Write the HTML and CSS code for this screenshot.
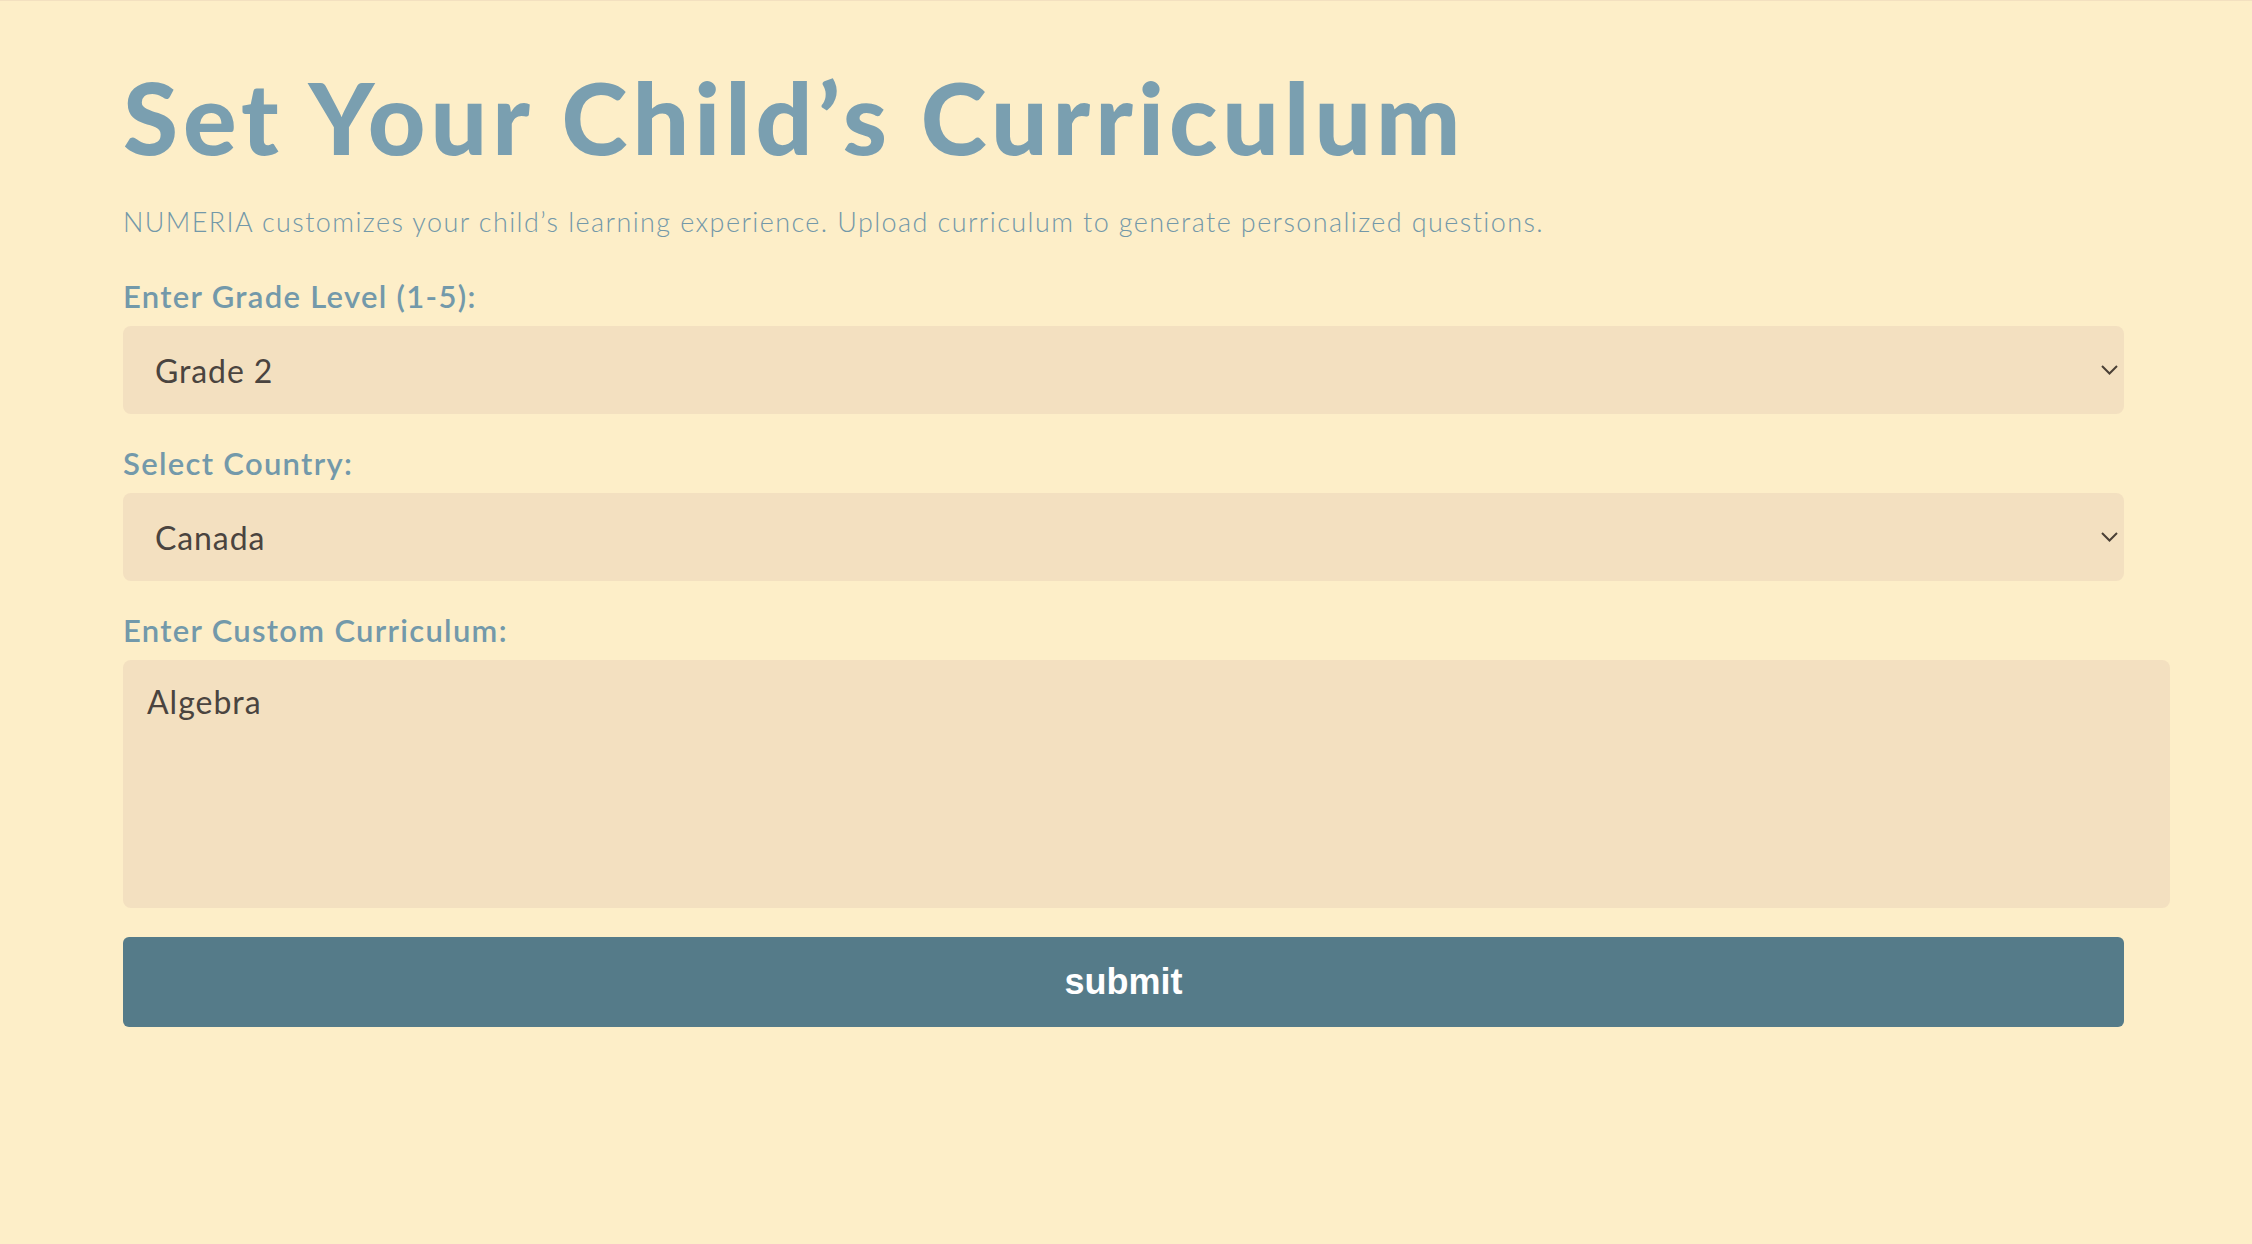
FILE: index.html
```html
<!DOCTYPE html>
<html lang="en">
<head>
<meta charset="utf-8">
<title>Set Your Child’s Curriculum</title>
<link rel="stylesheet" href="styles.css">
</head>
<body>
<main class="page">
  <h1 class="title">Set Your Child’s Curriculum</h1>
  <p class="subtitle">NUMERIA customizes your child’s learning experience. Upload curriculum to generate personalized questions.</p>
  <form class="form">
    <label class="label" for="grade">Enter Grade Level (1-5):</label>
    <div class="select-wrap">
      <select id="grade" class="select">
        <option>Grade 1</option>
        <option selected>Grade 2</option>
        <option>Grade 3</option>
        <option>Grade 4</option>
        <option>Grade 5</option>
      </select>
      <svg class="chevron" viewBox="0 0 17 10" width="17" height="10"><path d="M1 1 L8.5 8.5 L16 1" fill="none" stroke="#4a4036" stroke-width="2"/></svg>
    </div>
    <label class="label" for="country">Select Country:</label>
    <div class="select-wrap">
      <select id="country" class="select">
        <option selected>Canada</option>
        <option>United States</option>
        <option>United Kingdom</option>
      </select>
      <svg class="chevron" viewBox="0 0 17 10" width="17" height="10"><path d="M1 1 L8.5 8.5 L16 1" fill="none" stroke="#4a4036" stroke-width="2"/></svg>
    </div>
    <label class="label" for="custom">Enter Custom Curriculum:</label>
    <textarea id="custom" class="textarea">Algebra</textarea>
    <button type="button" class="submit">submit</button>
  </form>
</main>
</body>
</html>
```
FILE: styles.css
```css
html, body {
  margin: 0;
  padding: 0;
}
body {
  background: #fdeec8;
  border-top: 1px solid #f3e0c0;
  font-family: "Lato", "Open Sans", sans-serif;
  min-height: 1243px;
}
.page {
  padding: 0 128px 0 123px;
}
.title {
  margin: 55px 0 0;
  font-family: "Lato", sans-serif;
  font-weight: 900;
  font-size: 100px;
  line-height: 120px;
  letter-spacing: 5px;
  color: #7a9fb0;
}
.subtitle {
  margin: 30px 0 0;
  font-size: 27px;
  line-height: 32.4px;
  font-weight: 300;
  letter-spacing: 1.4px;
  color: #7398a8;
}
.form {
  display: flex;
  flex-direction: column;
  width: 2001px;
  margin-top: 40px;
}
.label {
  font-size: 31px;
  line-height: 37px;
  font-weight: 600;
  letter-spacing: 1.3px;
  color: #7399aa;
  margin-bottom: 11px;
}
.select-wrap {
  position: relative;
  margin-bottom: 31px;
}
.select {
  appearance: none;
  -webkit-appearance: none;
  width: 100%;
  height: 88px;
  border: none;
  border-radius: 8px;
  background: #f3e0c0;
  color: #4a443f;
  font-family: "Lato", sans-serif;
  font-size: 32px;
  letter-spacing: 0.9px;
  padding: 0 32px;
  outline: none;
  display: block;
}
.chevron {
  position: absolute;
  right: 6px;
  top: 39px;
}
.textarea {
  height: 248px;
  box-sizing: border-box;
  width: 2047px;
  border: none;
  border-radius: 8px;
  background: #f3e0c0;
  color: #4a443f;
  font-family: "Lato", sans-serif;
  font-size: 32px;
  letter-spacing: 1px;
  padding: 22px 24px;
  resize: none;
  outline: none;
  display: block;
}
.submit {
  margin-top: 29px;
  height: 90px;
  width: 100%;
  border: none;
  border-radius: 6px;
  background: #557b89;
  color: #ffffff;
  font-family: "Liberation Sans", Arial, sans-serif;
  font-weight: 700;
  font-size: 36px;
  cursor: pointer;
}
```
